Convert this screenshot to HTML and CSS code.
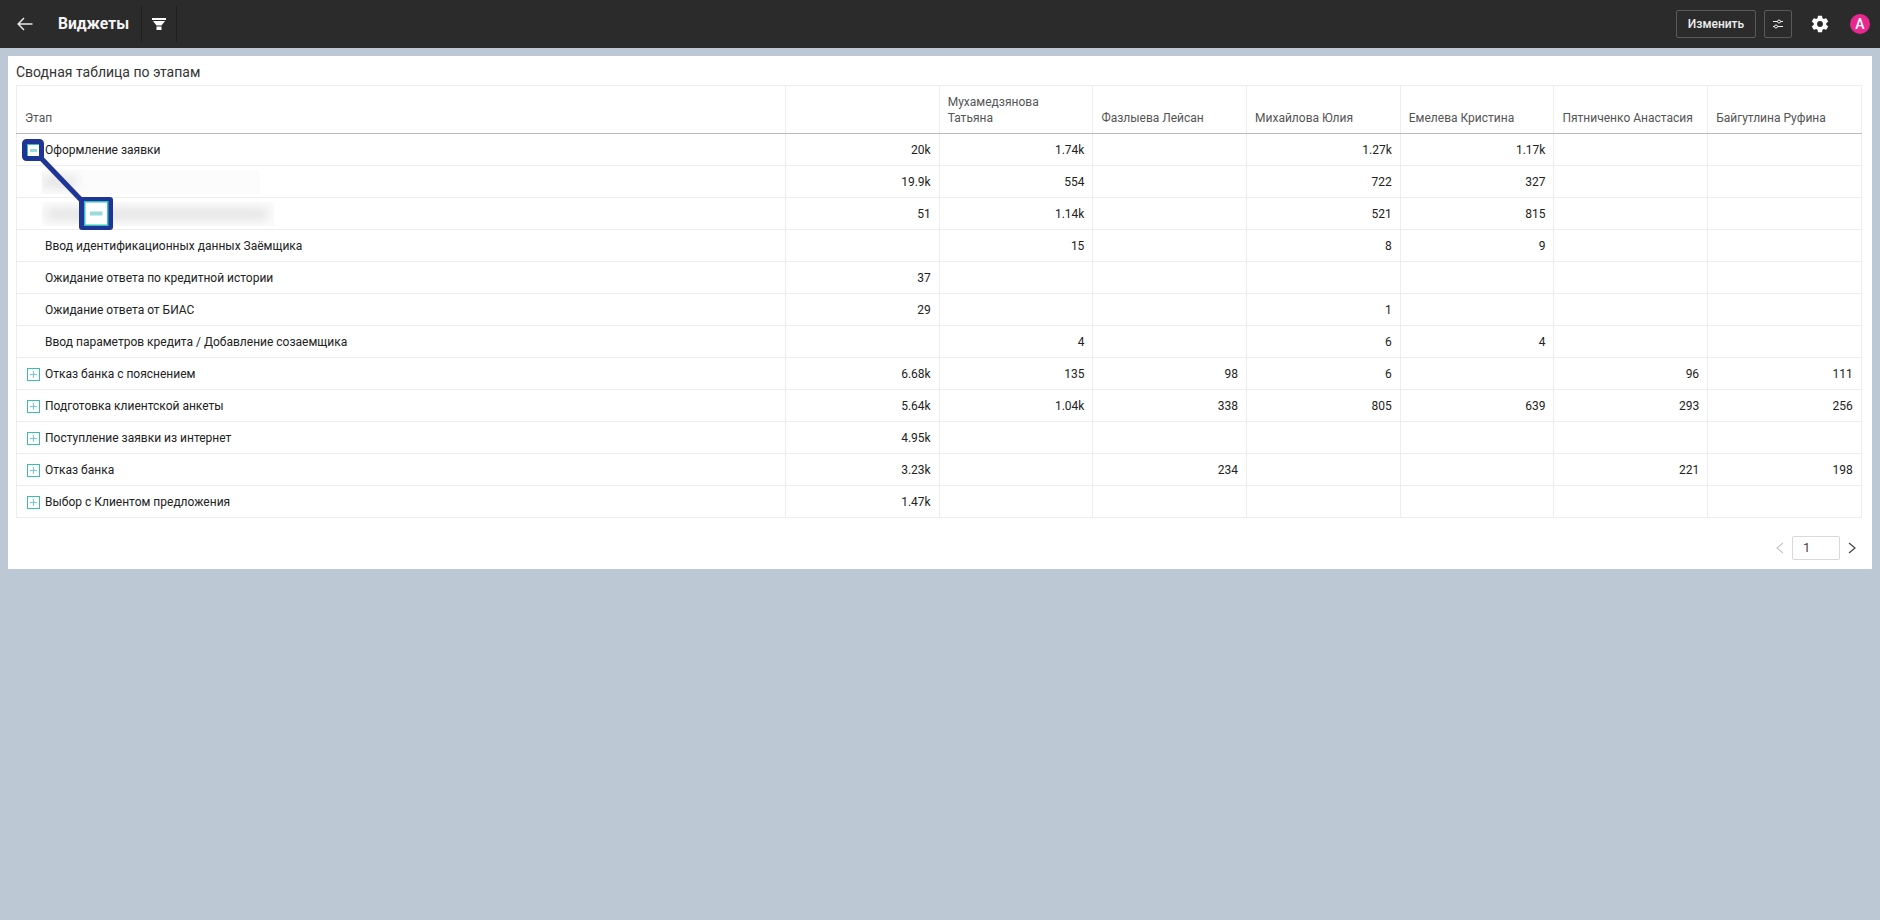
FILE: index.html
```html
<!DOCTYPE html>
<html lang="ru">
<head>
<meta charset="utf-8">
<title>Виджеты</title>
<link rel="stylesheet" href="styles.css">
</head>
<body>
<header class="topbar">
  <button class="back" aria-label="Назад">
    <svg width="16" height="14" viewBox="0 0 16 14"><path d="M15.500 7H1.200M7 1 1.200 7 7 13" fill="none" stroke="#e8e8e8" stroke-width="1.500"/></svg>
  </button>
  <h1 class="page-title">Виджеты</h1>
  <div class="filter-slot">
    <svg width="14" height="12" viewBox="0 0 14 12"><path d="M0 0h14v2H0zM1 3h12L9.500 7.500h-5zM4.500 8.500h5V12h-5z" fill="#fff"/></svg>
  </div>
  <div class="spacer"></div>
  <button class="btn-edit">Изменить</button>
  <button class="btn-sliders" aria-label="Настроить">
    <svg width="12" height="12" viewBox="0 0 12 12"><g fill="none" stroke="#eee" stroke-width="1"><path d="M1 3.500h4.500M8.500 3.500H11M1 8.500h1.500M5.500 8.500H11"/><circle cx="7" cy="3.500" r="1.500"/><circle cx="4" cy="8.500" r="1.500"/></g></svg>
  </button>
  <svg class="gear" width="20" height="20" viewBox="0 0 24 24"><path fill="#fff" fill-rule="evenodd" d="M19.430 12.980c.04-.32.07-.64.07-.98s-.03-.66-.07-.98l2.110-1.650c.19-.15.24-.42.12-.64l-2-3.460c-.12-.22-.39-.3-.61-.22l-2.490 1c-.52-.4-1.080-.73-1.690-.98l-.38-2.650C14.460 2.180 14.250 2 14 2h-4c-.25 0-.46.18-.49.420l-.38 2.650c-.61.25-1.170.59-1.690.98l-2.490-1c-.23-.09-.49 0-.61.22l-2 3.460c-.13.22-.07.49.12.64l2.110 1.650c-.04.32-.07.65-.07.98s.03.66.07.98l-2.110 1.650c-.19.15-.24.42-.12.64l2 3.460c.12.22.39.3.61.22l2.490-1c.52.4 1.080.73 1.690.98l.38 2.650c.03.24.24.42.49.42h4c.25 0 .46-.18.49-.42l.38-2.650c.61-.25 1.170-.59 1.690-.98l2.490 1c.23.09.49 0 .61-.22l2-3.460c.12-.22.07-.49-.12-.64l-2.110-1.650zM12 15.500a3.500 3.500 0 1 1 0-7 3.500 3.500 0 0 1 0 7z"/></svg>
  <div class="avatar">A</div>
</header>

<main class="page">
  <section class="card">
    <h2 class="card-title">Сводная таблица по этапам</h2>
    <table class="pivot">
      <colgroup><col class="col-stage"><col class="col-num"><col class="col-num"><col class="col-num"><col class="col-num"><col class="col-num"><col class="col-num"><col class="col-num"></colgroup>
      <thead>
        <tr><th>Этап</th><th></th><th>Мухамедзянова Татьяна</th><th>Фазлыева Лейсан</th><th>Михайлова Юлия</th><th>Емелева Кристина</th><th>Пятниченко Анастасия</th><th>Байгутлина Руфина</th></tr>
      </thead>
      <tbody>
        <tr><td><span class="tree minus"></span>Оформление заявки</td><td>20k</td><td>1.74k</td><td></td><td>1.27k</td><td>1.17k</td><td></td><td></td></tr>
        <tr><td class="child"><span class="smudge smudge-short"></span></td><td>19.9k</td><td>554</td><td></td><td>722</td><td>327</td><td></td><td></td></tr>
        <tr><td class="child"><span class="smudge smudge-long"></span></td><td>51</td><td>1.14k</td><td></td><td>521</td><td>815</td><td></td><td></td></tr>
        <tr><td class="child">Ввод идентификационных данных Заёмщика</td><td></td><td>15</td><td></td><td>8</td><td>9</td><td></td><td></td></tr>
        <tr><td class="child">Ожидание ответа по кредитной истории</td><td>37</td><td></td><td></td><td></td><td></td><td></td><td></td></tr>
        <tr><td class="child">Ожидание ответа от БИАС</td><td>29</td><td></td><td></td><td>1</td><td></td><td></td><td></td></tr>
        <tr><td class="child">Ввод параметров кредита / Добавление созаемщика</td><td></td><td>4</td><td></td><td>6</td><td>4</td><td></td><td></td></tr>
        <tr><td><span class="tree plus"></span>Отказ банка с пояснением</td><td>6.68k</td><td>135</td><td>98</td><td>6</td><td></td><td>96</td><td>111</td></tr>
        <tr><td><span class="tree plus"></span>Подготовка клиентской анкеты</td><td>5.64k</td><td>1.04k</td><td>338</td><td>805</td><td>639</td><td>293</td><td>256</td></tr>
        <tr><td><span class="tree plus"></span>Поступление заявки из интернет</td><td>4.95k</td><td></td><td></td><td></td><td></td><td></td><td></td></tr>
        <tr><td><span class="tree plus"></span>Отказ банка</td><td>3.23k</td><td></td><td>234</td><td></td><td></td><td>221</td><td>198</td></tr>
        <tr><td><span class="tree plus"></span>Выбор с Клиентом предложения</td><td>1.47k</td><td></td><td></td><td></td><td></td><td></td><td></td></tr>
      </tbody>
    </table>
    <nav class="pager">
      <svg class="chev" width="10" height="12" viewBox="0 0 10 12"><path d="M8 1 2 6l6 5" fill="none" stroke="#c8c8c8" stroke-width="1.200"/></svg>
      <div class="page-input">1</div>
      <svg class="chev" width="10" height="12" viewBox="0 0 10 12"><path d="M2 1l6 5-6 5" fill="none" stroke="#444" stroke-width="1.200"/></svg>
    </nav>
  </section>
</main>

<svg class="callout" width="120" height="240" viewBox="0 0 120 240">
  <path d="M40 157 84 203" stroke="#1f3596" stroke-width="5" fill="none"/>
  <rect x="24.500" y="141.500" width="17" height="17" rx="2" fill="none" stroke="#1f3596" stroke-width="5"/>
  <rect x="79" y="197" width="34" height="33" rx="3" fill="#1f3596"/>
  <rect x="84.750" y="201.750" width="23" height="23.500" fill="#fff" stroke="#35c0bb" stroke-width="1.500"/>
  <rect x="90" y="211.500" width="12.500" height="4" fill="#9adcd9"/>
</svg>
</body>
</html>
```

FILE: styles.css
```css
* { box-sizing: border-box; }
html, body { height: 100%; }
body {
  margin: 0;
  background: #bcc8d4;
  font-family: Roboto, "Liberation Sans", sans-serif;
  font-size: 12px;
  color: #222;
  position: relative;
  overflow: hidden;
}
.topbar {
  height: 48px;
  background: #2b2b2b;
  display: flex;
  align-items: center;
  color: #fff;
}
.back {
  width: 58px;
  height: 48px;
  padding: 0 0 0 17px;
  background: none;
  border: 0;
  display: flex;
  align-items: center;
}
.page-title {
  margin: 0;
  font-size: 15.600px;
  font-weight: 700;
  width: 83px;
  color: #f4f4f4;
}
.filter-slot {
  width: 36px;
  height: 36px;
  border-left: 1px solid #1f1f1f;
  border-right: 1px solid #1f1f1f;
  display: flex;
  align-items: center;
  justify-content: center;
}
.spacer { flex: 1; }
.btn-edit, .btn-sliders {
  height: 28px;
  background: none;
  border: 1px solid #5a5a5a;
  border-radius: 2px;
  color: #eee;
  font: 500 12px Roboto, sans-serif;
  padding: 0;
  display: flex;
  align-items: center;
  justify-content: center;
}
.btn-edit { width: 80px; margin-right: 8px; }
.btn-sliders { width: 28px; margin-right: 18px; }
.gear { margin-right: 20px; }
.avatar {
  width: 20px;
  height: 20px;
  border-radius: 50%;
  background: #e8288f;
  color: #fff;
  font-size: 14px;
  font-weight: 500;
  line-height: 20px;
  text-align: center;
  margin-right: 10px;
}
.page { padding: 8px; }
.card {
  background: #fff;
  padding: 8px 10px 9px 8px;
}
.card-title {
  margin: 0;
  height: 21px;
  font-size: 14px;
  font-weight: 400;
  line-height: 16px;
  color: #333;
}
.pivot {
  width: 1845px;
  table-layout: fixed;
  border-collapse: collapse;
  font-size: 12px;
}
.col-stage { width: 769px; }
.col-num { width: 153.700px; }
.pivot th {
  height: 48px;
  padding: 0 8px 7px;
  border: 1px solid #eee;
  border-bottom: 1px solid #bbb;
  vertical-align: bottom;
  text-align: left;
  font-weight: 400;
  line-height: 16px;
  color: #555;
}
.pivot td {
  height: 32px;
  padding: 0 8px;
  border: 1px solid #eee;
  text-align: right;
  color: #222;
  white-space: nowrap;
}
.pivot td:first-child { text-align: left; }
.pivot td.child { padding-left: 28px; }
.tree {
  display: inline-block;
  width: 13px;
  height: 13px;
  margin: 0 5.500px 0 1.500px;
  vertical-align: -3px;
  border: 1px solid #35c0bb;
  position: relative;
  background: #fff;
}
.tree::before, .plus::after {
  content: "";
  position: absolute;
  background: #9adcd9;
}
.tree::before { left: 2px; right: 2px; top: 4px; height: 3px; }
.plus::before { left: 2px; right: 2px; top: 5px; height: 1px; background: #6fd0cc; }
.plus::after { top: 2px; bottom: 2px; left: 5px; width: 1px; background: #6fd0cc; }
.smudge {
  display: block;
  position: relative;
  height: 24px;
  margin-left: -3px;
  background: #fcfcfc;
  overflow: hidden;
}
.smudge::before {
  content: "";
  position: absolute;
  left: 0;
  top: 8px;
  height: 8px;
  background: #d8d8d8;
  filter: blur(6px);
}
.smudge-short { width: 218px; }
.smudge-short::before { width: 34px; }
.smudge-long { width: 232px; }
.smudge-long::before { left: 4px; width: 222px; }
.pager {
  margin-top: 18px;
  display: flex;
  justify-content: flex-end;
  align-items: center;
  gap: 7px;
  padding-right: 5px;
}
.chev { display: block; }
.page-input {
  width: 48px;
  height: 24px;
  border: 1px solid #d9d9d9;
  border-radius: 2px;
  padding-left: 10px;
  font-size: 13px;
  line-height: 22px;
  color: #444;
}
.callout {
  position: absolute;
  left: 0;
  top: 0;
  pointer-events: none;
}
```
